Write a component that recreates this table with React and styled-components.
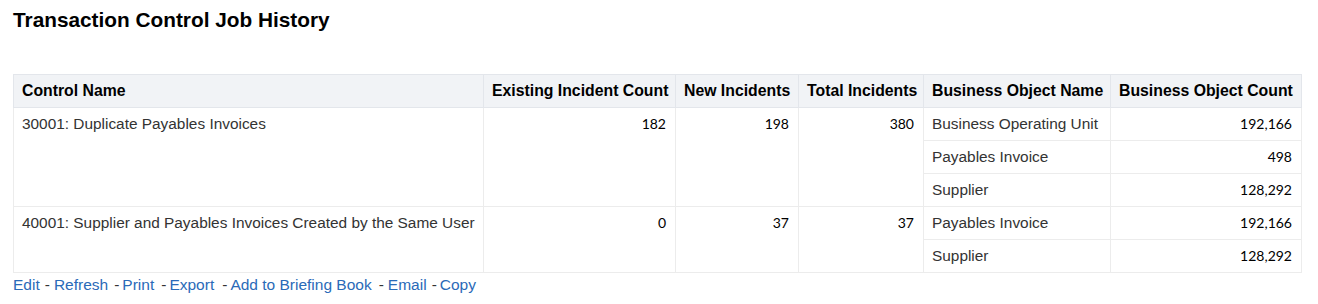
import React from 'react';
import styled, { createGlobalStyle } from 'styled-components';

const GlobalStyle = createGlobalStyle`
  body {
    margin: 0;
    background: #ffffff;
    font-family: "Liberation Sans", Arial, sans-serif;
  }
`;

const Page = styled.div`
  padding: 8px 13px;
`;

const Title = styled.h1`
  margin: 0;
  font-size: 20.8px;
  line-height: 24px;
  font-weight: bold;
  color: #000;
`;

const Table = styled.table`
  margin-top: 42px;
  width: 1288px;
  table-layout: fixed;
  border-collapse: collapse;
  border: 1px solid #e1e4e9;
`;

const Th = styled.th`
  height: 32px;
  padding: 0 8px;
  background: #f1f3f6;
  border: 1px solid #e3e6eb;
  text-align: left;
  font-size: 15.8px;
  font-weight: bold;
  color: #000;
  white-space: nowrap;
`;

const Td = styled.td`
  height: 32px;
  padding: 0 ${p => (p.$num ? '9px' : '8px')} 0 8px;
  border: 1px solid #ececec;
  vertical-align: ${p => (p.$span ? 'top' : 'middle')};
  text-align: ${p => (p.$num ? 'right' : 'left')};
  font-family: ${p => (p.$num ? 'Lato, "Open Sans", sans-serif' : '"Liberation Sans", Arial, sans-serif')};
  font-size: ${p => (p.$num ? '14px' : '15.4px')};
  line-height: 32px;
  color: ${p => (p.$num ? '#000' : '#333')};
  white-space: nowrap;
`;

const Actions = styled.div`
  margin-top: 3px;
  font-size: 15.5px;
  line-height: 18px;
  color: #333;
`;

const Link = styled.a`
  color: #2a6ab8;
  text-decoration: none;
  cursor: pointer;
`;

const Sep = styled.span`
  margin: 0 ${p => p.$after}px 0 ${p => p.$before}px;
`;

const rows = [
  {
    name: '30001: Duplicate Payables Invoices',
    existing: '182',
    added: '198',
    total: '380',
    objects: [
      ['Business Operating Unit', '192,166'],
      ['Payables Invoice', '498'],
      ['Supplier', '128,292'],
    ],
  },
  {
    name: '40001: Supplier and Payables Invoices Created by the Same User',
    existing: '0',
    added: '37',
    total: '37',
    objects: [
      ['Payables Invoice', '192,166'],
      ['Supplier', '128,292'],
    ],
  },
];

// label, gap before dash, gap after dash
const actions = [
  ['Edit', 5, 4],
  ['Refresh', 6, 3],
  ['Print', 7, 3],
  ['Export', 8, 3],
  ['Add to Briefing Book', 7, 4],
  ['Email', 5, 3],
  ['Copy'],
];

const App = () => (
  <Page>
    <GlobalStyle />
    <Title>Transaction Control Job History</Title>
    <Table>
      <colgroup>
        <col style={{ width: 470 }} />
        <col style={{ width: 192 }} />
        <col style={{ width: 123 }} />
        <col style={{ width: 125 }} />
        <col style={{ width: 187 }} />
        <col style={{ width: 191 }} />
      </colgroup>
      <thead>
        <tr>
          <Th>Control Name</Th>
          <Th>Existing Incident Count</Th>
          <Th>New Incidents</Th>
          <Th>Total Incidents</Th>
          <Th>Business Object Name</Th>
          <Th>Business Object Count</Th>
        </tr>
      </thead>
      <tbody>
        {rows.map(row =>
          row.objects.map(([objName, objCount], i) => (
            <tr key={row.name + objName}>
              {i === 0 && (
                <>
                  <Td $span rowSpan={row.objects.length}>{row.name}</Td>
                  <Td $span $num rowSpan={row.objects.length}>{row.existing}</Td>
                  <Td $span $num rowSpan={row.objects.length}>{row.added}</Td>
                  <Td $span $num rowSpan={row.objects.length}>{row.total}</Td>
                </>
              )}
              <Td>{objName}</Td>
              <Td $num>{objCount}</Td>
            </tr>
          ))
        )}
      </tbody>
    </Table>
    <Actions>
      {actions.map(([label, before, after]) => (
        <React.Fragment key={label}>
          <Link>{label}</Link>
          {before !== undefined && <Sep $before={before} $after={after}>-</Sep>}
        </React.Fragment>
      ))}
    </Actions>
  </Page>
);

export default App;
